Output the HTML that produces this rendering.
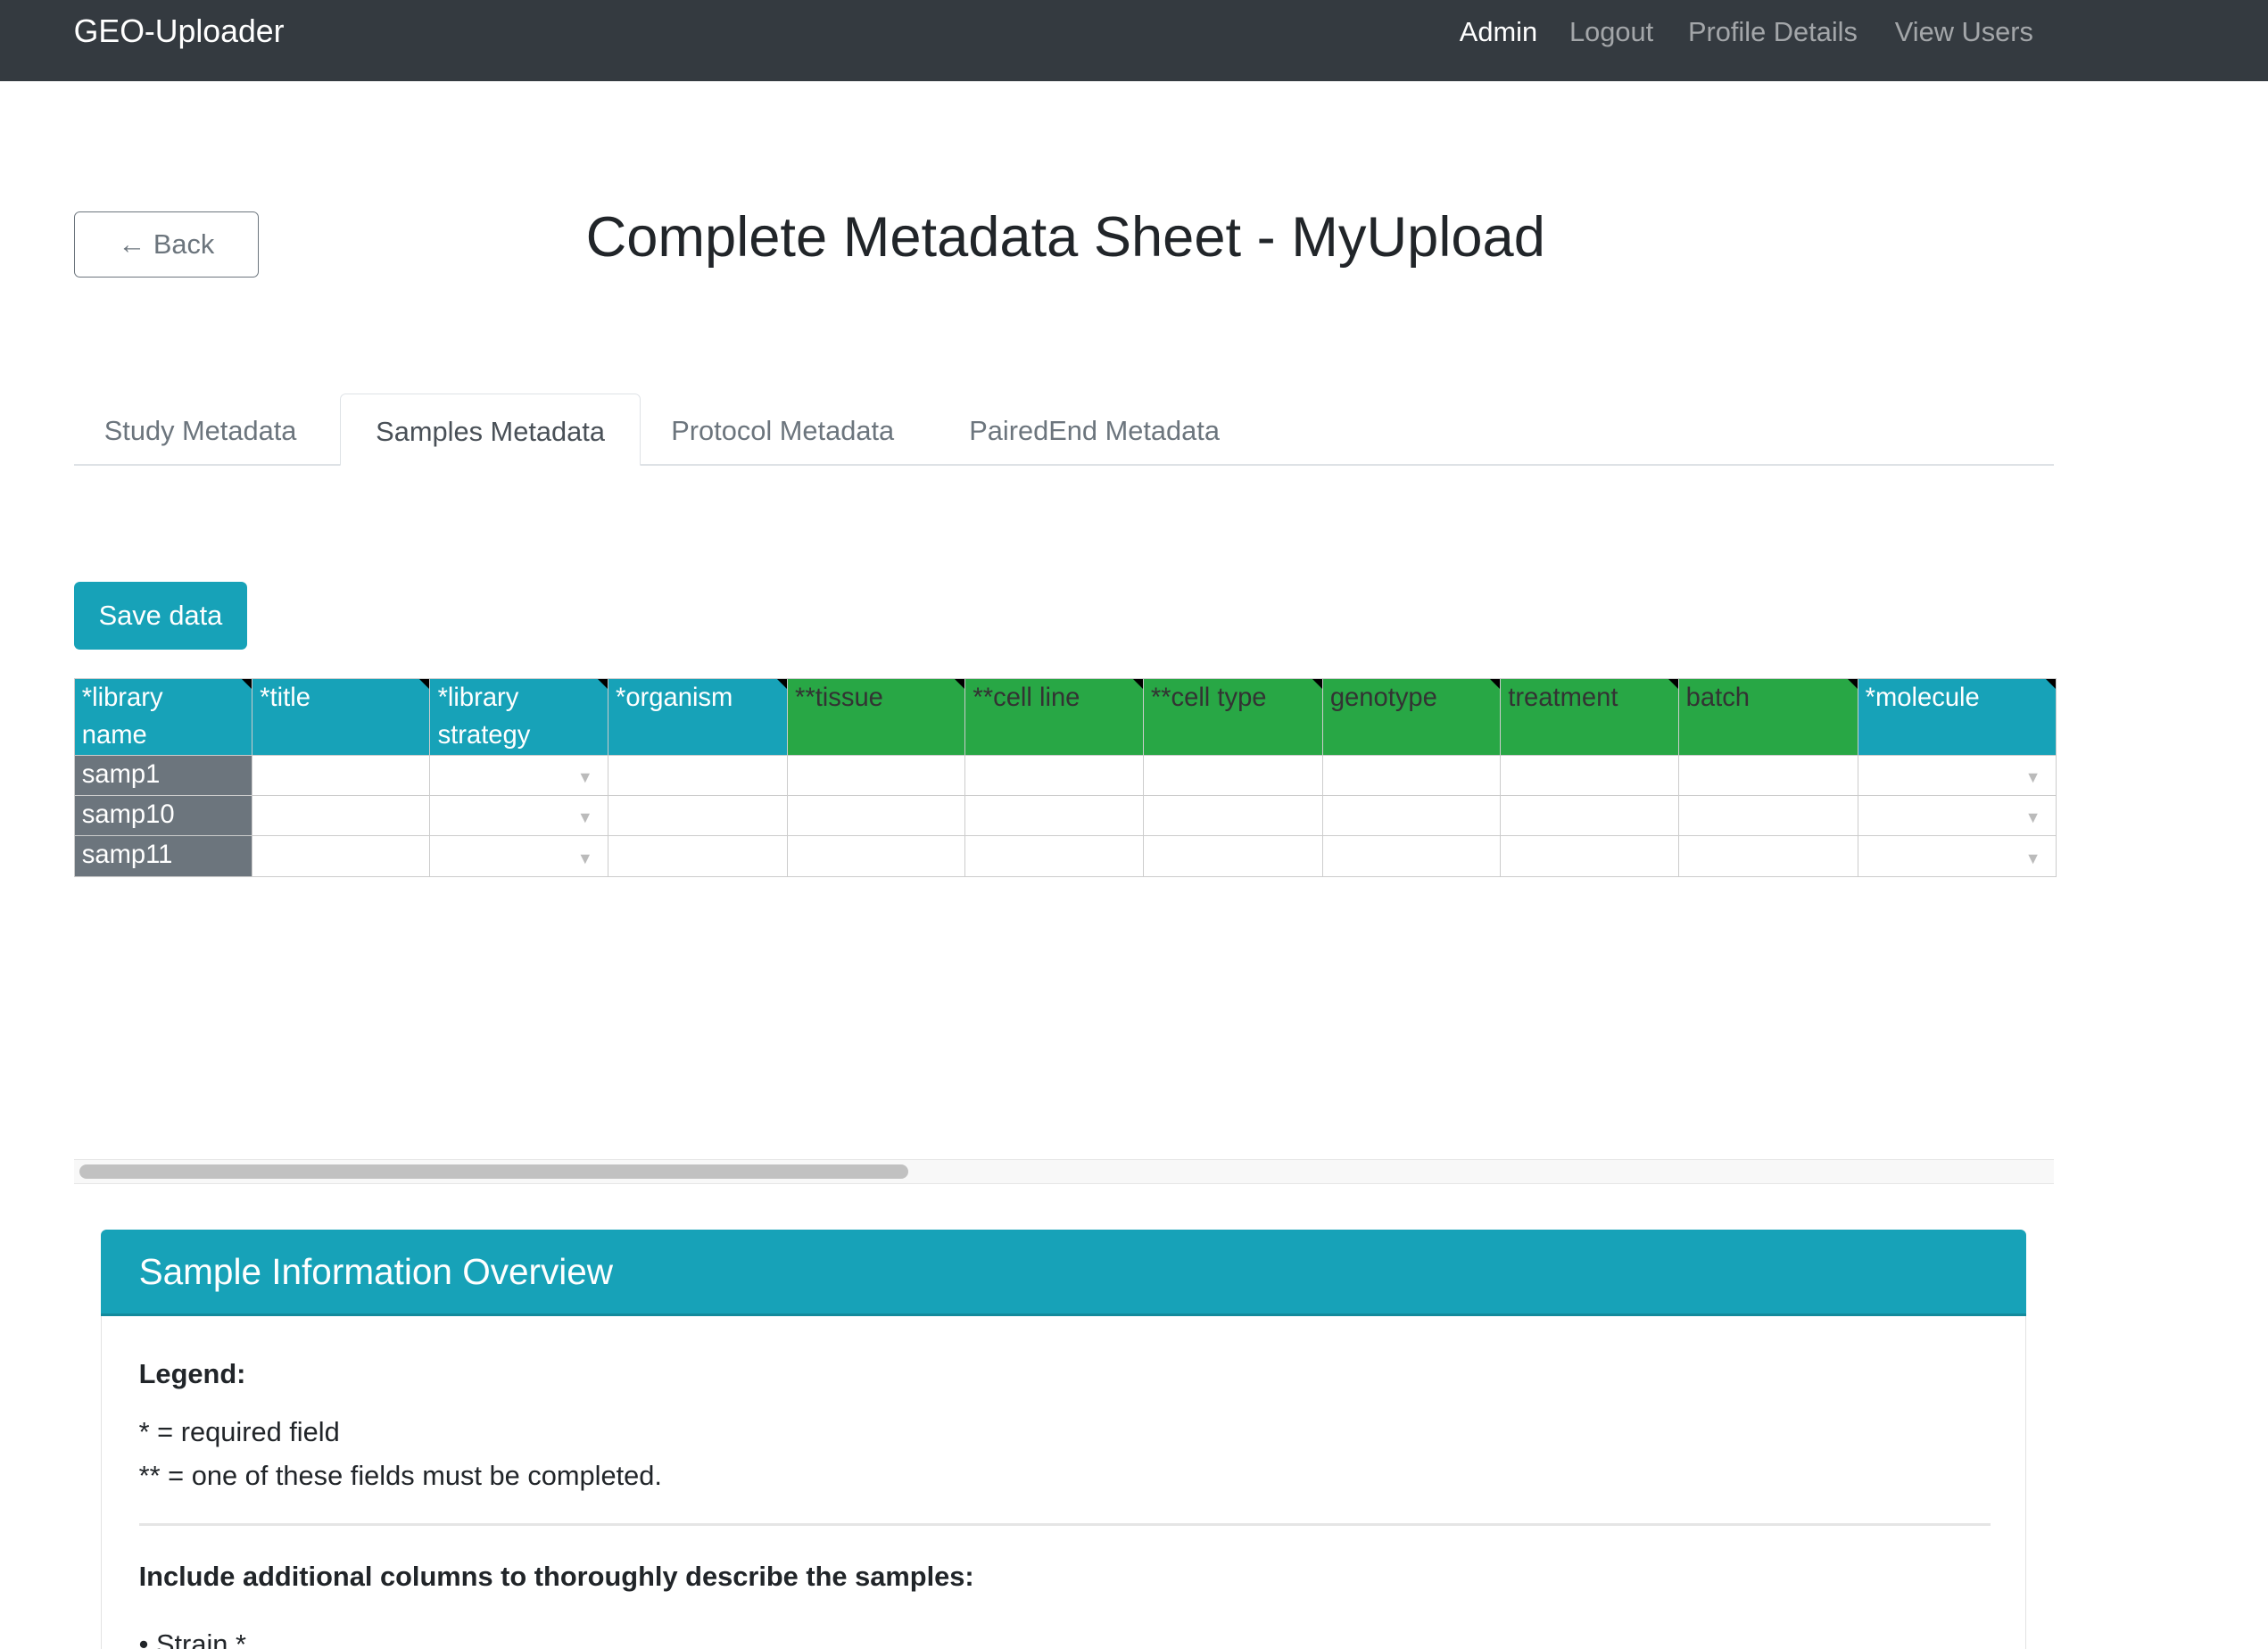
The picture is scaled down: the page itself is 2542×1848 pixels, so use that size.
<!DOCTYPE html>
<html><head><meta charset="utf-8">
<style>
html{zoom:1.6212;height:1140px;overflow:hidden}
body{margin:0;width:1568px;height:1140px;overflow:hidden;background:#fff;font-family:"Liberation Sans",sans-serif;color:#212529;position:relative}
.a{position:absolute}
.nav{left:0;top:0;width:1568px;height:56px;background:#343a40}
.nav span{position:absolute;top:11px;font-size:19px;color:rgba(255,255,255,.55)}
.btn{border-radius:4px;box-sizing:border-box;font-size:19px;display:flex;align-items:center;justify-content:center}
table{border-collapse:collapse;table-layout:fixed}
td{border:1px solid #ccc;box-sizing:border-box;padding:0 5px;font-size:18px;line-height:26px;height:28px;vertical-align:top;position:relative;overflow:hidden}
th{border:1px solid #ccc;font-weight:normal;text-align:left;vertical-align:top;padding:0 5px;font-size:18px;line-height:26px;height:52px;box-sizing:border-box;position:relative}
.t{background:#17a2b8;color:#fff}.g{background:#28a745;color:#333}
th:after{content:"";position:absolute;right:0;top:0;border-top:7px solid #000;border-left:7px solid transparent}
.rh{background:#6c757d;color:#fff}
.dd:after{content:"▼";position:absolute;right:10px;top:2px;font-size:11px;color:#bbb}
.tab{top:272px;height:50px;font-size:19px;color:#6c757d;line-height:52px}
</style></head><body>
<div class="a nav">
<span style="left:51px;top:9px;font-size:22px;color:#fff">GEO-Uploader</span>
<span style="left:1009px;color:#fff">Admin</span>
<span style="left:1085px">Logout</span>
<span style="left:1167px">Profile Details</span>
<span style="left:1310px">View Users</span>
</div>
<div class="a btn" style="left:51px;top:146px;width:128px;height:46px;border:1px solid #6c757d;color:#6c757d">← Back</div>
<div class="a" style="left:405px;top:142px;font-size:39px;font-weight:500;color:#212529;white-space:nowrap">Complete Metadata Sheet - MyUpload</div>
<div class="a" style="left:51px;top:321px;width:1369px;height:1px;background:#dee2e6"></div>
<div class="a tab" style="left:72px">Study Metadata</div>
<div class="a tab" style="left:235px;width:208px;box-sizing:border-box;border:1px solid #dee2e6;border-bottom:1px solid #fff;border-radius:4px 4px 0 0;background:#fff;color:#495057;text-align:center">Samples Metadata</div>
<div class="a tab" style="left:464px">Protocol Metadata</div>
<div class="a tab" style="left:670px">PairedEnd Metadata</div>
<div class="a btn" style="left:51px;top:402px;width:120px;height:47px;background:#17a2b8;color:#fff">Save data</div>
<table class="a" style="left:51px;top:469px;width:1370px">
<colgroup><col style="width:123px"><col style="width:123px"><col style="width:123px"><col style="width:124px"><col style="width:123px"><col style="width:123px"><col style="width:124px"><col style="width:123px"><col style="width:123px"><col style="width:124px"><col style="width:137px"></colgroup>
<tr><th class="t">*library<br>name</th><th class="t">*title</th><th class="t">*library strategy</th><th class="t">*organism</th><th class="g">**tissue</th><th class="g">**cell line</th><th class="g">**cell type</th><th class="g">genotype</th><th class="g">treatment</th><th class="g">batch</th><th class="t">*molecule</th></tr>
<tr><td class="rh">samp1</td><td></td><td class="dd"></td><td></td><td></td><td></td><td></td><td></td><td></td><td></td><td class="dd"></td></tr>
<tr><td class="rh">samp10</td><td></td><td class="dd"></td><td></td><td></td><td></td><td></td><td></td><td></td><td></td><td class="dd"></td></tr>
<tr><td class="rh">samp11</td><td></td><td class="dd"></td><td></td><td></td><td></td><td></td><td></td><td></td><td></td><td class="dd"></td></tr>
</table>
<div class="a" style="left:51px;top:801px;width:1369px;height:16px;background:#f8f8f8;border-top:1px solid #e6e6e6;border-bottom:1px solid #e6e6e6"></div>
<div class="a" style="left:55px;top:805px;width:573px;height:10px;background:#c1c1c1;border-radius:5px"></div>
<div class="a" style="left:70px;top:850px;width:1331px;height:300px;border:1px solid #e3e3e3;border-bottom:none;border-radius:4px 4px 0 0;box-sizing:border-box"></div>
<div class="a" style="left:70px;top:850px;width:1331px;height:60px;background:#17a2b8;border-bottom:2px solid #138a9c;box-sizing:border-box;border-radius:4px 4px 0 0"></div>
<div class="a" style="left:96px;top:865px;font-size:25px;color:#fff">Sample Information Overview</div>
<div class="a" style="left:96px;top:939px;font-size:19px;font-weight:bold">Legend:</div>
<div class="a" style="left:96px;top:979px;font-size:19px">* = required field</div>
<div class="a" style="left:96px;top:1009px;font-size:19px">** = one of these fields must be completed.</div>
<div class="a" style="left:96px;top:1053px;width:1280px;height:2px;background:#e5e5e5"></div>
<div class="a" style="left:96px;top:1079px;font-size:19px;font-weight:bold">Include additional columns to thoroughly describe the samples:</div>
<div class="a" style="left:96px;top:1126px;font-size:19px">• Strain *</div>
</body></html>
